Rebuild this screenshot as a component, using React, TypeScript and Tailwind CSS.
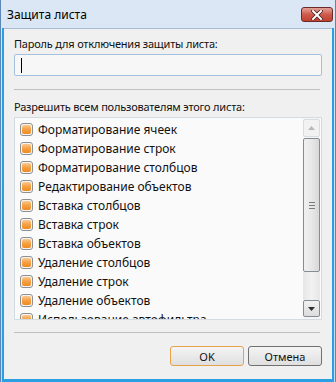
import React from 'react';

const items = [
  'Форматирование ячеек',
  'Форматирование строк',
  'Форматирование столбцов',
  'Редактирование объектов',
  'Вставка столбцов',
  'Вставка строк',
  'Вставка объектов',
  'Удаление столбцов',
  'Удаление строк',
  'Удаление объектов',
  'Использование автофильтра',
];

function Check() {
  return (
    <div className="w-[13px] h-[13px] shrink-0 rounded-[3px] border border-[#8e8f8f] bg-[#f4f4f4] p-[1px]">
      <div className="w-full h-full rounded-[2px] bg-gradient-to-b from-[#fbc88c] via-[#f5a043] to-[#f08a1d]" />
    </div>
  );
}

function CloseButton() {
  return (
    <div className="w-[32px] h-[15px] rounded-[3px] border border-[#6b2a2a] bg-gradient-to-b from-[#e2a197] via-[#cd5a4b] to-[#c2402f] flex items-center justify-center">
      <svg width="12" height="10" viewBox="0 0 12 10">
        <path d="M2 1 L10 9 M10 1 L2 9" stroke="#4a2020" strokeWidth="3.6" strokeLinecap="square" />
        <path d="M2 1 L10 9 M10 1 L2 9" stroke="#ffffff" strokeWidth="2" strokeLinecap="square" />
      </svg>
    </div>
  );
}

export default function App() {
  return (
    <div
      className="w-[336px] h-[382px] flex flex-col bg-gradient-to-b from-[#dbe7f4] to-[#c6d9ef] border-l border-r border-[#5b86b5] text-[11px] text-[#111]"
      style={{ fontFamily: '"Noto Sans", "Open Sans", sans-serif' }}
    >
      <div className="h-[28px] flex items-center justify-between pl-[6px] pr-[2px] pt-[1px]">
        <span className="text-[12px] text-black">Защита листа</span>
        <CloseButton />
      </div>
      <div className="flex-1 flex flex-col mx-[1px] border-l-2 border-r-2 border-b-[3px] border-[#2aa0e2]">
        <div className="flex-1 flex flex-col bg-[#f0f0f0] px-[10px] border-t border-[#a9bcd4]">
          <div className="mt-[7px] h-[16px] leading-[16px] tracking-[-0.2px]">Пароль для отключения защиты листа:</div>
          <div className="mt-[2px] h-[22px] rounded-[2px] border border-[#a4c2e0] bg-[#f7f7f7] flex items-center pl-[6px]">
            <div className="w-px h-[15px] bg-black" />
          </div>
          <div className="mt-[13px] mr-[2px] h-px bg-[#c0c0c0]" />
          <div className="mt-[9px] h-[16px] leading-[16px] tracking-[-0.2px]">Разрешить всем пользователям этого листа:</div>
          <div className="mt-[2px] h-[203px] border border-[#d4dbe2] bg-[#fafafa] flex overflow-hidden">
            <div className="flex-1 pt-[2px] pl-[5px] overflow-hidden text-[12px]">
              {items.map((t) => (
                <div key={t} className="h-[19px] flex items-center gap-[5px] whitespace-nowrap">
                  <Check />
                  <span>{t}</span>
                </div>
              ))}
            </div>
            <div className="w-[17px] mr-[1px] flex flex-col pt-[1px] pb-[2px] bg-[#f5f5f5]">
              <div className="h-[18px] rounded-[2px] border border-[#dcdcdc] bg-[#f2f2f2] flex items-center justify-center">
                <svg width="7" height="4" viewBox="0 0 7 4"><path d="M3.5 0 L7 4 L0 4 Z" fill="#b8b8b8" /></svg>
              </div>
              <div className="mt-[1px] h-[134px] rounded-[2px] border border-[#858c94] bg-gradient-to-r from-[#f0f0f0] via-[#e8e8e8] to-[#d8d8d8] flex flex-col items-center justify-center gap-[2px]">
                <div className="w-[6px] h-px bg-[#7a7a7a]" />
                <div className="w-[6px] h-px bg-[#7a7a7a]" />
                <div className="w-[6px] h-px bg-[#7a7a7a]" />
              </div>
              <div className="flex-1 bg-gradient-to-r from-[#e6e6e6] via-[#f2f2f2] to-[#e6e6e6]" />
              <div className="h-[17px] rounded-[2px] border border-[#858c94] bg-gradient-to-b from-[#f2f2f2] to-[#dcdcdc] flex items-center justify-center">
                <svg width="7" height="4" viewBox="0 0 7 4"><path d="M0 0 L7 0 L3.5 4 Z" fill="#303030" /></svg>
              </div>
            </div>
          </div>
          <div className="mt-[12px] mr-[2px] h-px bg-[#c0c0c0]" />
          <div className="mt-[13px] flex justify-end gap-[4px]">
            <button className="w-[74px] h-[20px] rounded-[3px] border border-[#e8a24a] bg-gradient-to-b from-[#f4f4f4] to-[#dfdfdf] text-[11px] leading-none">
              OK
            </button>
            <button className="w-[74px] h-[20px] rounded-[3px] border border-[#707070] bg-gradient-to-b from-[#f4f4f4] to-[#dfdfdf] text-[11px] leading-none">
              Отмена
            </button>
          </div>
        </div>
      </div>
    </div>
  );
}
